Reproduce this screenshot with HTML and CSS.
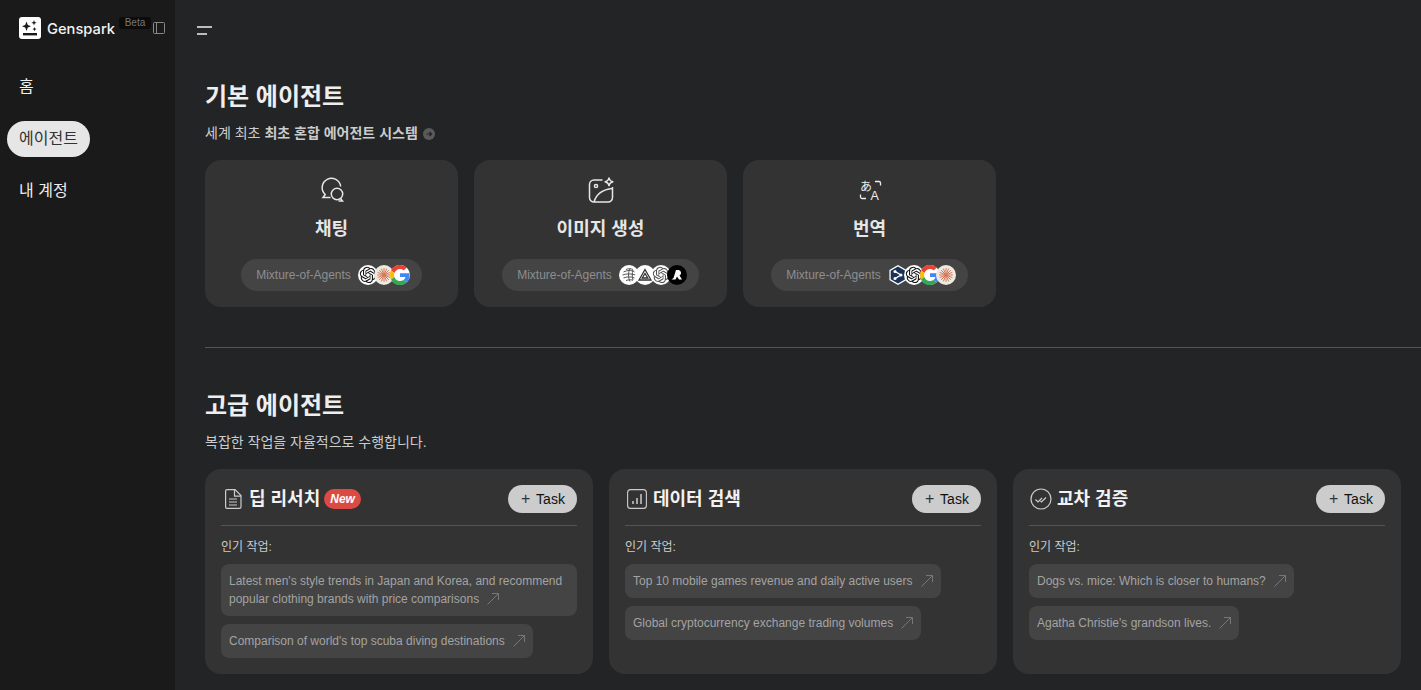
FILE: index.html
```html
<!DOCTYPE html>
<html lang="ko">
<head>
    <meta charset="UTF-8">
    <meta name="viewport" content="width=device-width, initial-scale=1.0">
    <title>Genspark</title>
    <link rel="stylesheet" href="styles.css">
</head>
<body>
    <!-- shared logos -->
    <svg class="sprites" width="0" height="0">
        <symbol id="logo-openai" viewBox="0 0 20 20">
            <circle cx="10" cy="10" r="10" fill="#fff"/>
            <path transform="translate(1.8 1.8) scale(.68)" fill="#111" d="M22.2819 9.8211a5.9847 5.9847 0 0 0-.5157-4.9108 6.0462 6.0462 0 0 0-6.5098-2.9A6.0651 6.0651 0 0 0 4.9807 4.1818a5.9847 5.9847 0 0 0-3.9977 2.9 6.0462 6.0462 0 0 0 .7427 7.0966 5.98 5.98 0 0 0 .511 4.9107 6.051 6.051 0 0 0 6.5146 2.9001A5.9847 5.9847 0 0 0 13.2599 24a6.0557 6.0557 0 0 0 5.7718-4.2058 5.9894 5.9894 0 0 0 3.9977-2.9001 6.0557 6.0557 0 0 0-.7475-7.0729zm-9.022 12.6081a4.4755 4.4755 0 0 1-2.8764-1.0408l.1419-.0804 4.7783-2.7582a.7948.7948 0 0 0 .3927-.6813v-6.7369l2.02 1.1686a.071.071 0 0 1 .038.052v5.5826a4.504 4.504 0 0 1-4.4945 4.4944zm-9.6607-4.1254a4.4708 4.4708 0 0 1-.5346-3.0137l.142.0852 4.783 2.7582a.7712.7712 0 0 0 .7806 0l5.8428-3.3685v2.3324a.0804.0804 0 0 1-.0332.0615L9.74 19.9502a4.4992 4.4992 0 0 1-6.1408-1.6464zM2.3408 7.8956a4.485 4.485 0 0 1 2.3655-1.9728V11.6a.7664.7664 0 0 0 .3879.6765l5.8144 3.3543-2.0201 1.1685a.0757.0757 0 0 1-.071 0l-4.8303-2.7865A4.504 4.504 0 0 1 2.3408 7.872zm16.5963 3.8558L13.1038 8.364 15.1192 7.2a.0757.0757 0 0 1 .071 0l4.8303 2.7913a4.4944 4.4944 0 0 1-.6765 8.1042v-5.6772a.79.79 0 0 0-.407-.667zm2.0107-3.0231l-.142-.0852-4.7735-2.7818a.7759.7759 0 0 0-.7854 0L9.409 9.2297V6.8974a.0662.0662 0 0 1 .0284-.0615l4.8303-2.7866a4.4992 4.4992 0 0 1 6.6802 4.66zM8.3065 12.863l-2.02-1.1638a.0804.0804 0 0 1-.038-.0567V6.0742a4.4992 4.4992 0 0 1 7.3757-3.4537l-.142.0805L8.704 5.459a.7948.7948 0 0 0-.3927.6813zm1.0976-2.3654l2.602-1.4998 2.6069 1.4998v2.9994l-2.5974 1.4997-2.6067-1.4997Z"/>
        </symbol>
        <symbol id="logo-openai-gray" viewBox="0 0 20 20">
            <circle cx="10" cy="10" r="10" fill="#fff"/>
            <path transform="translate(1.8 1.8) scale(.68)" fill="#555" d="M22.2819 9.8211a5.9847 5.9847 0 0 0-.5157-4.9108 6.0462 6.0462 0 0 0-6.5098-2.9A6.0651 6.0651 0 0 0 4.9807 4.1818a5.9847 5.9847 0 0 0-3.9977 2.9 6.0462 6.0462 0 0 0 .7427 7.0966 5.98 5.98 0 0 0 .511 4.9107 6.051 6.051 0 0 0 6.5146 2.9001A5.9847 5.9847 0 0 0 13.2599 24a6.0557 6.0557 0 0 0 5.7718-4.2058 5.9894 5.9894 0 0 0 3.9977-2.9001 6.0557 6.0557 0 0 0-.7475-7.0729zm-9.022 12.6081a4.4755 4.4755 0 0 1-2.8764-1.0408l.1419-.0804 4.7783-2.7582a.7948.7948 0 0 0 .3927-.6813v-6.7369l2.02 1.1686a.071.071 0 0 1 .038.052v5.5826a4.504 4.504 0 0 1-4.4945 4.4944zm-9.6607-4.1254a4.4708 4.4708 0 0 1-.5346-3.0137l.142.0852 4.783 2.7582a.7712.7712 0 0 0 .7806 0l5.8428-3.3685v2.3324a.0804.0804 0 0 1-.0332.0615L9.74 19.9502a4.4992 4.4992 0 0 1-6.1408-1.6464zM2.3408 7.8956a4.485 4.485 0 0 1 2.3655-1.9728V11.6a.7664.7664 0 0 0 .3879.6765l5.8144 3.3543-2.0201 1.1685a.0757.0757 0 0 1-.071 0l-4.8303-2.7865A4.504 4.504 0 0 1 2.3408 7.872zm16.5963 3.8558L13.1038 8.364 15.1192 7.2a.0757.0757 0 0 1 .071 0l4.8303 2.7913a4.4944 4.4944 0 0 1-.6765 8.1042v-5.6772a.79.79 0 0 0-.407-.667zm2.0107-3.0231l-.142-.0852-4.7735-2.7818a.7759.7759 0 0 0-.7854 0L9.409 9.2297V6.8974a.0662.0662 0 0 1 .0284-.0615l4.8303-2.7866a4.4992 4.4992 0 0 1 6.6802 4.66zM8.3065 12.863l-2.02-1.1638a.0804.0804 0 0 1-.038-.0567V6.0742a4.4992 4.4992 0 0 1 7.3757-3.4537l-.142.0805L8.704 5.459a.7948.7948 0 0 0-.3927.6813zm1.0976-2.3654l2.602-1.4998 2.6069 1.4998v2.9994l-2.5974 1.4997-2.6067-1.4997Z"/>
        </symbol>
        <symbol id="logo-claude" viewBox="0 0 20 20">
            <circle cx="10" cy="10" r="10" fill="#efeadf"/>
            <path d="M10 3.5v13M3.5 10h13M5.4 5.4l9.2 9.2M14.6 5.4l-9.2 9.2M7.5 4l5 12M12.5 4l-5 12M4 7.5l12 5M4 12.5l12-5" stroke="#d4795a" stroke-width="1" stroke-linecap="round"/>
        </symbol>
        <symbol id="logo-google" viewBox="0 0 48 48">
            <circle cx="24" cy="24" r="24" fill="#fff"/>
            <path d="M24 9.5c3.54 0 6.71 1.22 9.21 3.6l6.85-6.85C35.9 2.38 30.47 0 24 0 14.62 0 6.51 5.38 2.56 13.22l7.98 6.19C12.43 13.72 17.74 9.5 24 9.5z" fill="#ea4335"/>
            <path d="M46.98 24.55c0-1.57-.15-3.09-.38-4.55H24v9.02h12.94c-.58 2.96-2.26 5.48-4.78 7.18l7.73 6c4.51-4.18 7.09-10.36 7.09-17.65z" fill="#4285f4"/>
            <path d="M10.53 28.59c-.48-1.45-.76-2.99-.76-4.59s.27-3.14.76-4.59l-7.98-6.19C.92 16.46 0 20.12 0 24c0 3.88.92 7.54 2.56 10.78l7.97-6.19z" fill="#fbbc05"/>
            <path d="M24 48c6.48 0 11.93-2.13 15.89-5.81l-7.73-6c-2.15 1.45-4.92 2.3-8.16 2.3-6.26 0-11.57-4.22-13.47-9.91l-7.98 6.19C6.51 42.62 14.62 48 24 48z" fill="#34a853"/>
        </symbol>
        <symbol id="logo-mesh" viewBox="0 0 20 20">
            <circle cx="10" cy="10" r="10" fill="#fff"/>
            <path d="M4.5 7c4-2 8-2 11 0M3.5 10c4-1.5 9-1.5 13 0M4.5 13c3-1.5 8-1.5 11 0M7 15.5c3-1 6-1 7 0M7 4.5c2-1 5-1 7 0M11 3.5c-2 4-2 9 0 13M14 5c-1 3-1 7 0 10" fill="none" stroke="#555" stroke-width="1"/>
        </symbol>
        <symbol id="logo-tri" viewBox="0 0 20 20">
            <circle cx="10" cy="10" r="10" fill="#fff"/>
            <path d="M10 4.5 16 15H4zM10 8.5 12.8 13H7.2z" fill="none" stroke="#333" stroke-width="1.3"/>
        </symbol>
        <symbol id="logo-recraft" viewBox="0 0 20 20">
            <circle cx="10" cy="10" r="10" fill="#000"/>
            <path d="M6.5 13 9 5h2.5a3 3 0 0 1 1 5.6l2.500 3.900h-3L10 11.500 8.500 14.500H4.500z" fill="#fff"/>
        </symbol>
        <symbol id="logo-deepl" viewBox="0 0 20 20">
            <path d="M10 0 18.6 5v10L10 20 1.4 15V5z" fill="#fff"/>
            <path d="M10 1.5 17.3 5.8v8.4L10 18.5 2.7 14.2V5.8z" fill="#1b3358"/>
            <path d="M7 6.5 13 10l-6 3.5" fill="none" stroke="#fff" stroke-width="1.4"/>
            <circle cx="7" cy="6.5" r="1.5" fill="#fff"/>
            <circle cx="13" cy="10" r="1.5" fill="#fff"/>
            <circle cx="7" cy="13.5" r="1.5" fill="#fff"/>
        </symbol>
        <symbol id="icon-go" viewBox="0 0 12 12">
            <path d="M.5 11.5 11.5.5M5 .5h6.5V7" fill="none" stroke="currentColor" stroke-width="1"/>
        </symbol>
    </svg>

    <aside class="sidebar">
        <div class="brand">
            <svg class="brand-logo" viewBox="0 0 22 22">
                <rect width="22" height="22" rx="3" fill="#fff"/>
                <path d="M7.5 4.5 8.8 8l3.2 1.2-3.2 1.300-1.300 3.500-1.300-3.500L3 9.200 6.200 8zM15 3l.7 2 2 .7-2 .7-.7 2-.7-2-2-.7 2-.7zM15.500 10l.6 1.500 1.500.6-1.500.6-.6 1.500-.6-1.500-1.500-.6 1.500-.6z" fill="#1a1a1a"/>
                <rect x="4" y="16" width="14" height="2.4" fill="#1a1a1a"/>
            </svg>
            <span class="brand-name">Genspark</span>
            <span class="beta">Beta</span>
            <svg class="panel-icon" viewBox="0 0 12 12">
                <rect x=".5" y=".5" width="11" height="11" rx="1" fill="none" stroke="#888"/>
                <path d="M3.5 1v10" stroke="#888"/>
            </svg>
        </div>
        <nav class="nav">
            <a class="nav-item">홈</a>
            <a class="nav-item active">에이전트</a>
            <a class="nav-item">내 계정</a>
        </nav>
    </aside>

    <main class="main">
        <div class="topbar">
            <svg class="menu-icon" viewBox="0 0 16 9">
                <path d="M1 1h15M1 8h10" stroke="#eee" stroke-width="1.5"/>
            </svg>
        </div>

        <section class="section">
            <h2>기본 에이전트</h2>
            <p class="sub">세계 최초 <b>최초 혼합 에어전트 시스템</b>
                <svg class="sub-arrow" viewBox="0 0 12 12">
                    <circle cx="6" cy="6" r="6" fill="#5a5a5a"/>
                    <path d="M3.5 6h5M6.5 4l2 2-2 2" fill="none" stroke="#222" stroke-width="1.2"/>
                </svg>
            </p>
            <div class="basic-row">
                <div class="basic-card">
                    <svg class="basic-icon" viewBox="0 0 26 26" fill="none" stroke="#e6e6e6" stroke-width="1.5">
                        <path d="M11.5 20.5H4l2.200-3A9.300 9.300 0 1 1 21.700 9.500"/>
                        <circle cx="18" cy="17" r="5.7"/>
                        <path d="M21.5 21.5l2 2.500h-4"/>
                    </svg>
                    <h3>채팅</h3>
                    <div class="mix">
                        <span>Mixture-of-Agents</span>
                        <div class="logos">
                            <svg><use href="#logo-openai"/></svg>
                            <svg><use href="#logo-claude"/></svg>
                            <svg><use href="#logo-google"/></svg>
                        </div>
                    </div>
                </div>
                <div class="basic-card">
                    <svg class="basic-icon" viewBox="0 0 26 26" fill="none" stroke="#e6e6e6" stroke-width="1.5">
                        <path d="M14.5 3H6a4.5 4.5 0 0 0-4.5 4.5v13A4.5 4.5 0 0 0 6 25h14a4.5 4.5 0 0 0 4.5-4.5V10"/>
                        <circle cx="8" cy="9" r="1.6"/>
                        <path d="M6 25c2-7 8-12.500 18.500-13.500"/>
                        <path d="M21 .5c.4 2.800 1.500 3.900 4.300 4.300-2.800.4-3.900 1.500-4.300 4.300-.4-2.800-1.500-3.900-4.300-4.300 2.800-.4 3.900-1.500 4.300-4.300z"/>
                    </svg>
                    <h3>이미지 생성</h3>
                    <div class="mix">
                        <span>Mixture-of-Agents</span>
                        <div class="logos">
                            <svg><use href="#logo-mesh"/></svg>
                            <svg><use href="#logo-tri"/></svg>
                            <svg><use href="#logo-openai-gray"/></svg>
                            <svg><use href="#logo-recraft"/></svg>
                        </div>
                    </div>
                </div>
                <div class="basic-card">
                    <svg class="basic-icon" viewBox="0 0 26 26" fill="none" stroke="#eee" stroke-width="1.3">
                        <text class="translate-kana" x="3" y="13.5">あ</text>
                        <text class="translate-latin" x="13.5" y="22.5">A</text>
                        <path d="M18 4.5h4a1.500 1.500 0 0 1 1.500 1.500v2.500M3.500 17.500V20A1.500 1.500 0 0 0 5 21.500h4"/>
                    </svg>
                    <h3>번역</h3>
                    <div class="mix">
                        <span>Mixture-of-Agents</span>
                        <div class="logos">
                            <svg><use href="#logo-deepl"/></svg>
                            <svg><use href="#logo-openai"/></svg>
                            <svg><use href="#logo-google"/></svg>
                            <svg><use href="#logo-claude"/></svg>
                        </div>
                    </div>
                </div>
            </div>
        </section>

        <hr class="divider">

        <section class="section">
            <h2>고급 에이전트</h2>
            <p class="sub sub-light">복잡한 작업을 자율적으로 수행합니다.</p>
            <div class="adv-row">
                <div class="adv-card">
                    <div class="adv-head">
                        <svg class="adv-icon" viewBox="0 0 20 20" fill="none" stroke="#ccc" stroke-width="1.2">
                            <path d="M4 .6h8l6 6V18a1.400 1.400 0 0 1-1.400 1.400H4A1.400 1.400 0 0 1 2.600 18V2A1.400 1.400 0 0 1 4 .6z"/>
                            <path d="M11.5.6v6.500H18M6 10h8M6 13h8M6 16h8"/>
                        </svg>
                        <h4>딥 리서치</h4>
                        <span class="new-badge">New</span>
                        <button class="task-btn"><i>+</i> Task</button>
                    </div>
                    <p class="popular">인기 작업:</p>
                    <div class="tasks">
                        <a class="task">Latest men's style trends in Japan and Korea, and recommend popular clothing brands with price comparisons<svg class="go"><use href="#icon-go"/></svg></a>
                        <a class="task">Comparison of world's top scuba diving destinations<svg class="go"><use href="#icon-go"/></svg></a>
                    </div>
                </div>
                <div class="adv-card">
                    <div class="adv-head">
                        <svg class="adv-icon" viewBox="0 0 20 20" fill="none" stroke="#ccc" stroke-width="1.1">
                            <rect x=".6" y=".6" width="18.8" height="18.8" rx="3"/>
                            <path d="M6 15v-3M10 15V9M14 15V5" stroke-width="1.5"/>
                        </svg>
                        <h4>데이터 검색</h4>
                        <button class="task-btn"><i>+</i> Task</button>
                    </div>
                    <p class="popular">인기 작업:</p>
                    <div class="tasks">
                        <a class="task">Top 10 mobile games revenue and daily active users<svg class="go"><use href="#icon-go"/></svg></a>
                        <a class="task">Global cryptocurrency exchange trading volumes<svg class="go"><use href="#icon-go"/></svg></a>
                    </div>
                </div>
                <div class="adv-card">
                    <div class="adv-head">
                        <svg class="adv-icon adv-icon-round" viewBox="0 0 22 22" fill="none" stroke="#ccc" stroke-width="1.2">
                            <circle cx="11" cy="11" r="10"/>
                            <path d="M5.5 11.5l2.500 2.500 4-4M10.500 13l1 1 4.500-4.500"/>
                        </svg>
                        <h4>교차 검증</h4>
                        <button class="task-btn"><i>+</i> Task</button>
                    </div>
                    <p class="popular">인기 작업:</p>
                    <div class="tasks">
                        <a class="task">Dogs vs. mice: Which is closer to humans?<svg class="go"><use href="#icon-go"/></svg></a>
                        <a class="task">Agatha Christie's grandson lives.<svg class="go"><use href="#icon-go"/></svg></a>
                    </div>
                </div>
            </div>
        </section>
    </main>
</body>
</html>
```

FILE: styles.css
```css
html, body {
    height: 100%;
}

body {
    margin: 0;
    display: flex;
    overflow: hidden;
    background: #232425;
    color: #eee;
    font-family: "Liberation Sans", "Noto Sans CJK KR", sans-serif;
}

.sprites {
    display: none;
}

/* sidebar */
.sidebar {
    width: 175px;
    flex-shrink: 0;
    background: #1a1a1a;
    padding: 17px 7px 0;
    box-sizing: border-box;
}

.brand {
    display: flex;
    align-items: flex-start;
    height: 22px;
    padding-left: 12px;
}

.brand-logo {
    width: 22px;
    height: 22px;
}

.brand-name {
    margin-left: 6px;
    margin-top: 3px;
    font-family: "Inter", "Liberation Sans", sans-serif;
    font-size: 14.7px;
    font-weight: 500;
    color: #f2f2f2;
    width: 72px;
}

.beta {
    background: #0c0c0c;
    color: #777;
    font-size: 10px;
    line-height: 12px;
    padding: 0 5px;
    border-radius: 3px;
    width: 22px;
    text-align: center;
}

.panel-icon {
    width: 12px;
    height: 12px;
    margin-left: 2px;
    margin-top: 5px;
}

.nav {
    display: flex;
    flex-direction: column;
    align-items: flex-start;
    margin-top: 30px;
    gap: 16px;
}

.nav-item {
    font-size: 16px;
    line-height: 36px;
    padding: 0 12px;
    border-radius: 18px;
    color: #eee;
}

.nav-item.active {
    background: #e6e6e6;
    color: #333;
}

/* main */
.main {
    flex: 1;
    min-width: 0;
    padding-left: 30px;
}

.topbar {
    height: 80px;
    padding-top: 26px;
    box-sizing: border-box;
}

.menu-icon {
    display: block;
    width: 16px;
    height: 9px;
    margin-left: -9px;
}

.section h2 {
    margin: 0;
    padding-top: 1px;
    font-size: 24px;
    line-height: 32px;
    font-weight: 700;
    color: #eee;
}

.sub {
    margin: 10px 0 0;
    font-size: 14px;
    line-height: 20px;
    color: #ccc;
    display: flex;
    align-items: center;
    gap: 4px;
}

.sub b {
    font-weight: 700;
}

.sub-arrow {
    width: 12px;
    height: 12px;
    margin-left: 1px;
    margin-top: 2px;
}

.basic-row {
    display: flex;
    gap: 16px;
    margin-top: 17px;
}

.basic-card {
    width: 253px;
    height: 147px;
    box-sizing: border-box;
    padding-top: 17px;
    background: #333;
    border-radius: 16px;
    display: flex;
    flex-direction: column;
    align-items: center;
}

.basic-icon {
    width: 26px;
    height: 26px;
    overflow: visible;
}

.translate-kana {
    font-family: "Noto Sans CJK JP", sans-serif;
    font-size: 12px;
    fill: #eee;
    stroke: none;
}

.translate-latin {
    font-family: "Liberation Sans", sans-serif;
    font-size: 12.5px;
    fill: #eee;
    stroke: none;
}

.basic-card h3 {
    margin: 13px 0 0;
    font-size: 18px;
    line-height: 26px;
    font-weight: 700;
    color: #e6e6e6;
}

.mix {
    margin-top: 17px;
    height: 32px;
    padding: 0 12px 0 15px;
    display: flex;
    align-items: center;
    gap: 7px;
    background: #444;
    border-radius: 16px;
    font-size: 12px;
    color: #8e8e8e;
}

.logos {
    display: flex;
}

.logos svg {
    width: 20px;
    height: 20px;
    margin-right: -4px;
}

.logos svg:last-child {
    margin-right: 0;
}

.divider {
    margin: 40px 0 41px;
    border: 0;
    border-top: 1px solid #555;
}

.adv-row {
    display: flex;
    gap: 16px;
    margin-top: 17px;
}

.adv-card {
    width: 388px;
    height: 205px;
    box-sizing: border-box;
    padding: 16px;
    background: #333;
    border-radius: 16px;
    flex-shrink: 0;
}

.adv-head {
    display: flex;
    align-items: center;
    height: 41px;
    padding-bottom: 12px;
    box-sizing: border-box;
    border-bottom: 1px solid #555;
}

.adv-icon {
    width: 20px;
    height: 20px;
    margin-left: 2px;
    margin-right: 6px;
}

.adv-icon-round {
    width: 22px;
    height: 22px;
    margin-left: 1px;
    margin-right: 5px;
}

.adv-head h4 {
    margin: -4px 0 0;
    font-size: 18px;
    font-weight: 700;
    color: #f2f2f2;
}

.new-badge {
    margin-left: 4px;
    background: #dc4a44;
    color: #fff;
    font-size: 12px;
    font-weight: 700;
    font-style: italic;
    line-height: 20px;
    height: 20px;
    padding: 0 6px;
    border-radius: 10px;
}

.task-btn {
    margin-left: auto;
    width: 69px;
    height: 28px;
    padding: 0 0 0 1px;
    border: 0;
    border-radius: 14px;
    background: #ccc;
    color: #111;
    font-family: inherit;
    font-size: 14px;
}

.task-btn i {
    font-style: normal;
    font-size: 16px;
    margin-right: 2px;
    color: #333;
}

.popular {
    margin: 13px 0 0;
    font-size: 12px;
    line-height: 16px;
    color: #ccc;
}

.tasks {
    display: flex;
    flex-direction: column;
    align-items: flex-start;
    gap: 8px;
    margin-top: 9px;
}

.task {
    padding: 8px;
    background: #444;
    border-radius: 8px;
    font-size: 12px;
    line-height: 18px;
    color: #a3a3a3;
}

.go {
    display: inline-block;
    width: 12px;
    height: 12px;
    margin-left: 8px;
    vertical-align: -2px;
    color: #777;
}
```
